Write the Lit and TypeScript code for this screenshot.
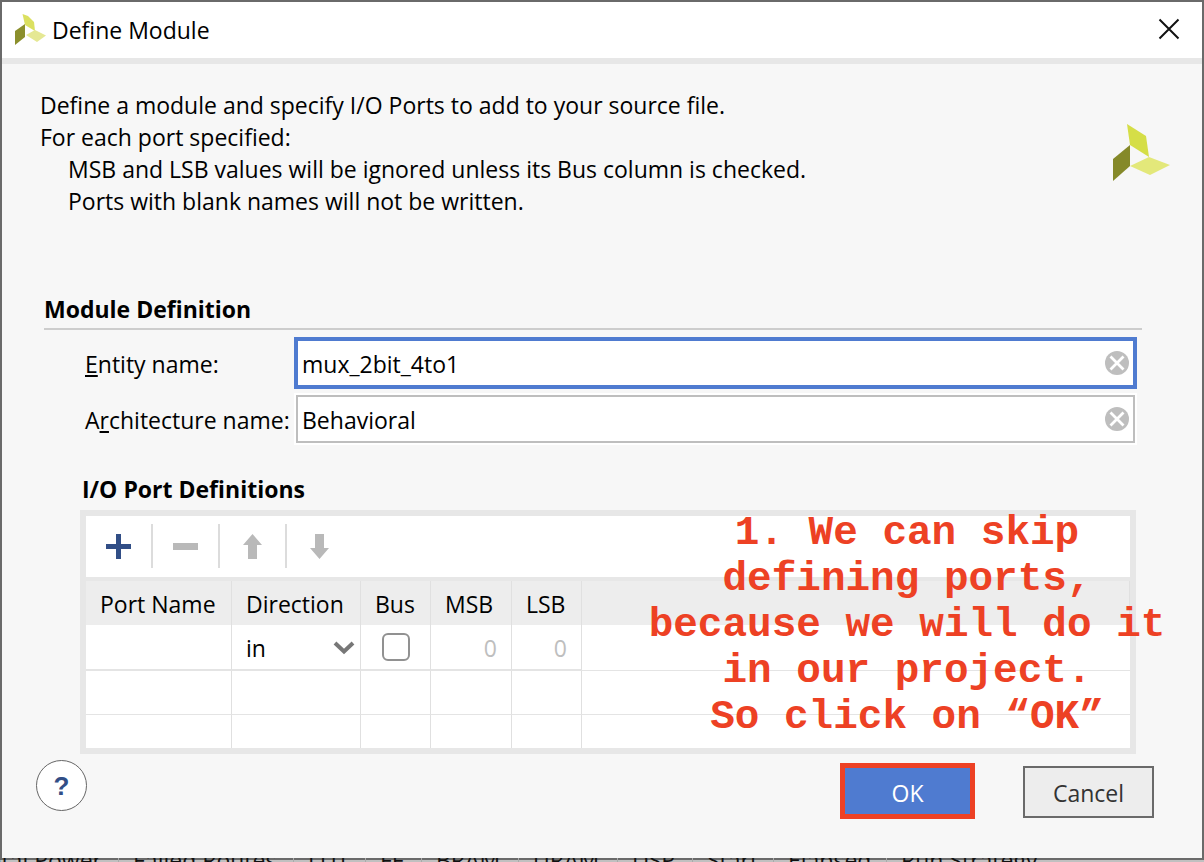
import { LitElement, html, css, svg } from "lit";
import { customElement, state } from "lit/decorators.js";

const logo = html`<svg viewBox="0 0 57 57" aria-hidden="true">
  <polygon points="14,0 33,12 36,33 17,21" fill="#d5de47"></polygon>
  <polygon points="17,21 17,42 0,57 0,35" fill="#858929"></polygon>
  <polygon points="17,42 36,33 57,41 37,51" fill="#e3e87a"></polygon>
</svg>`;

const titleLogo = html`<svg viewBox="0 0 31 31" aria-hidden="true">
  <path d="M7.500 0 13 2 19 8 20 17 10 11z" fill="#dbe060"></path>
  <path d="M10 10v13L0 31V17z" fill="#8b8f2c"></path>
  <path d="M11 21 20 16 31 21.500 22 28z" fill="#e5e894"></path>
</svg>`;

const clearIcon = html`<svg viewBox="0 0 24 24" width="24" height="24" aria-hidden="true">
  <circle cx="12" cy="12" r="12" fill="#bebebe"></circle>
  <path d="M5.500 5.500 18.500 18.500M18.500 5.500 5.500 18.500" stroke="#fff" stroke-width="2.8"></path>
</svg>`;

const toolIcons = [
  { label: "Add port", color: "#314e86", d: "M10 0h5v10h10v5H15v10h-5V15H0v-5h10z" },
  { label: "Remove port", color: "#b9b9b9", d: "M0 9h25v7H0z" },
  { label: "Move up", color: "#b9b9b9", d: "M12.500 0 22 11h-5v14H8V11H3z" },
  { label: "Move down", color: "#b9b9b9", d: "M8 0h9v14h5L12.500 25 3 14h5z" },
];

const reportColumns = ["Total Power", "Failed Routes", "LUT", "FF", "BRAM", "URAM", "DSP", "Start", "Elapsed", "Run Strategy"];

@customElement("app-root")
export class AppRoot extends LitElement {
  @state() entity = "mux_2bit_4to1";
  @state() architecture = "Behavioral";

  static styles = css`
    :host {
      display: block;
      height: 100vh;
      overflow: hidden;
      background: #c0c0c0;
      color: #000;
      font: 23px/32px "Open Sans", "Noto Sans", sans-serif;
    }
    * { box-sizing: border-box; }
    .screen { display: flex; flex-direction: column; height: 100%; }
    .dialog {
      flex: 1;
      min-height: 0;
      display: flex;
      flex-direction: column;
      border: 2px solid #6a6a6a;
      background: #f7f7f7;
    }
    .titlebar {
      display: flex;
      align-items: center;
      height: 62px;
      padding: 0 21px 2px 13px;
      background: #fff;
      border-bottom: 6px solid #e7e7e7;
    }
    .titlebar svg { display: block; }
    .titlelogo { width: 31px; height: 31px; margin-right: 6px; }
    h1, h2, h3, p { margin: 0; font-size: inherit; line-height: inherit; }
    h1 { font-weight: 400; flex: 1; padding-top: 2px; }
    button { font: inherit; padding: 0; border: 0; background: none; }
    .close { width: 24px; height: 24px; }
    .intro {
      display: flex;
      justify-content: space-between;
      padding: 25px 32px 0 38px;
    }
    .indent { padding-left: 28px; }
    .intro-logo { width: 57px; height: 57px; margin-top: 35px; }
    .intro-logo svg { display: block; }
    .module { padding: 76px 60px 0 42px; }
    .module h2 { padding-bottom: 3px; border-bottom: 2px solid #cdcdcd; }
    .fields {
      display: grid;
      grid-template-columns: 209px 1fr;
      row-gap: 4px;
      padding: 7px 5px 0 41px;
      align-items: center;
    }
    .fields label { padding-top: 2px; white-space: nowrap; }
    .field {
      display: flex;
      align-items: center;
      height: 52px;
      padding-right: 6px;
      border: 2px solid #fff;
      background: #fff;
      outline: 2px solid #bebebe;
      outline-offset: -4px;
    }
    .field.active { border: 4px solid #4f7bd0; padding-right: 4px; outline: 0; }
    .field.active input { padding-left: 4px; }
    input.text {
      flex: 1;
      min-width: 0;
      font: inherit;
      border: 0;
      outline: 0;
      padding: 2px 0 0 6px;
      background: transparent;
      color: inherit;
    }
    .clear { width: 24px; height: 24px; }
    .clear svg { display: block; }
    .ports { padding: 28px 6px 0 36px; }
    .ports h3 { padding: 0 0 5px 2px; }
    .panel { position: relative; border: 6px solid #e7e7e7; background: #fff; }
    .tools { display: flex; align-items: center; height: 65px; padding-bottom: 1px; border-bottom: 4px solid #e7e7e7; }
    .tool { width: 67px; height: 44px; border-right: 2px solid #dcdcdc; display: grid; place-items: center; }
    .tool:last-child { border-right-color: transparent; }
    .tool svg { display: block; }
    table { width: 100%; border-collapse: separate; border-spacing: 0; table-layout: fixed; }
    th, td { height: 44px; padding: 2px 14px 0; border-right: 1px solid #e0e0e0; border-bottom: 1px solid #e4e4e4; text-align: left; font-weight: 400; }
    th { background: #ededed; border-bottom: 0; white-space: nowrap; }
    td:last-child { border-right: 0; }
    tr.entry td { height: 46px; border-bottom-width: 2px; }
    tr.entry td:last-child { border-bottom-width: 1px; }
    tr.last td { height: 33px; border-bottom: 0; }
    .c-name { width: 146px; }
    .c-dir { width: 129px; }
    .c-bus { width: 70px; }
    .c-msb { width: 81px; }
    .c-lsb { width: 70px; }
    .num { text-align: right; color: #bebebe; }
    td.dir { padding-right: 5px; }
    .select { display: grid; align-items: center; }
    .select > * { grid-area: 1 / 1; }
    .select svg { justify-self: end; pointer-events: none; }
    select { appearance: none; width: 100%; border: 0; background: none; font: inherit; padding: 0; color: inherit; outline: 0; }
    td.bus { padding: 0; }
    .bus input {
      appearance: none;
      display: block;
      width: 28px;
      height: 28px;
      margin: 0 auto;
      border: 2px solid #919191;
      border-radius: 6px;
      background: #fff;
    }
    .note {
      position: absolute;
      right: -42px;
      top: -6px;
      width: 530px;
      text-align: center;
      font: bold 41px/46px "Liberation Mono", monospace;
      color: #ed4124;
      pointer-events: none;
    }
    .footer { display: flex; align-items: flex-start; padding: 0 48px 0 34px; margin-top: 6px; }
    .help { width: 51px; height: 51px; border: 1px solid #666; border-radius: 50%; background: #fff; color: #314e86; font: bold 26px/48px "Liberation Sans", sans-serif; }
    .spacer { flex: 1; }
    .ok { width: 135px; height: 56px; margin-top: 3px; border: 5px solid #ed4124; background: #4f7bd0; color: #fff; padding-top: 4px; }
    .cancel { width: 131px; height: 52px; margin: 6px 0 0 48px; border: 2px solid #6a6a6a; background: #ededed; color: #333; padding-top: 2px; }
    .report {
      position: relative;
      display: grid;
      grid-template-columns: 119px 175px 72px 56px 97px 99px 75px 81px 113px 1fr;
      grid-template-rows: 4px;
      align-items: center;
      height: 4px;
      margin-top: -2px;
      overflow: hidden;
      white-space: nowrap;
      color: #111;
      line-height: 24px;
    }
    .report span { padding-left: 14px; border-right: 1px solid #aaa; }
    .report span:first-child { padding: 0 16px 0 0; direction: rtl; }
    .report span:last-child { border-right: 0; }
  `;

  render() {
    return html`<div class="screen">
      <main class="dialog">
        <header class="titlebar">
          <div class="titlelogo">${titleLogo}</div>
          <h1>Define Module</h1>
          <button class="close" aria-label="Close">
            <svg width="24" height="24" viewBox="0 0 24 24"><path d="M2.500 2.500 21.500 21.500M21.500 2.500 2.500 21.500" stroke="#111" stroke-width="2"></path></svg>
          </button>
        </header>
        <section class="intro">
          <div>
            <p>Define a module and specify I/O Ports to add to your source file.</p>
            <p>For each port specified:</p>
            <p class="indent">MSB and LSB values will be ignored unless its Bus column is checked.</p>
            <p class="indent">Ports with blank names will not be written.</p>
          </div>
          <div class="intro-logo">${logo}</div>
        </section>
        <section class="module">
          <h2>Module Definition</h2>
          <div class="fields">
            <label for="entity"><u>E</u>ntity name:</label>
            <div class="field active">
              <input class="text" id="entity" .value=${this.entity} @input=${(e: any) => (this.entity = e.target.value)} />
              <button class="clear" aria-label="Clear entity name" @click=${() => (this.entity = "")}>${clearIcon}</button>
            </div>
            <label for="arch">A<u>r</u>chitecture name:</label>
            <div class="field">
              <input class="text" id="arch" .value=${this.architecture} @input=${(e: any) => (this.architecture = e.target.value)} />
              <button class="clear" aria-label="Clear architecture name" @click=${() => (this.architecture = "")}>${clearIcon}</button>
            </div>
          </div>
          <div class="ports">
            <h3>I/O Port Definitions</h3>
            <div class="panel">
              <div class="tools">
                ${toolIcons.map((t) => html`<button class="tool" aria-label=${t.label}>
                  <svg width="25" height="25" viewBox="0 0 25 25">${svg`<path d=${t.d} fill=${t.color}></path>`}</svg>
                </button>`)}
              </div>
              <table>
                <colgroup>
                  <col class="c-name" /><col class="c-dir" /><col class="c-bus" /><col class="c-msb" /><col class="c-lsb" /><col />
                </colgroup>
                <thead>
                  <tr><th>Port Name</th><th>Direction</th><th>Bus</th><th>MSB</th><th>LSB</th><th></th></tr>
                </thead>
                <tbody>
                  <tr class="entry">
                    <td></td>
                    <td class="dir"><div class="select">
                      <select aria-label="Direction"><option>in</option><option>out</option><option>inout</option></select>
                      <svg width="22" height="14" viewBox="0 0 22 14"><path d="M2 2 11 10.500 20 2" fill="none" stroke="#777" stroke-width="4"></path></svg>
                    </div></td>
                    <td class="bus"><input type="checkbox" aria-label="Bus" /></td>
                    <td class="num">0</td>
                    <td class="num">0</td>
                    <td></td>
                  </tr>
                  <tr><td></td><td></td><td></td><td></td><td></td><td></td></tr>
                  <tr class="last"><td></td><td></td><td></td><td></td><td></td><td></td></tr>
                </tbody>
              </table>
              <div class="note">1. We can skip<br />defining ports,<br />because we will do it<br />in our project.<br />So click on “OK”</div>
            </div>
          </div>
        </section>
        <footer class="footer">
          <button class="help" aria-label="Help">?</button>
          <div class="spacer"></div>
          <button class="ok">OK</button>
          <button class="cancel">Cancel</button>
        </footer>
      </main>
      <div class="report">${reportColumns.map((c) => html`<span>${c}</span>`)}</div>
    </div>`;
  }
}
